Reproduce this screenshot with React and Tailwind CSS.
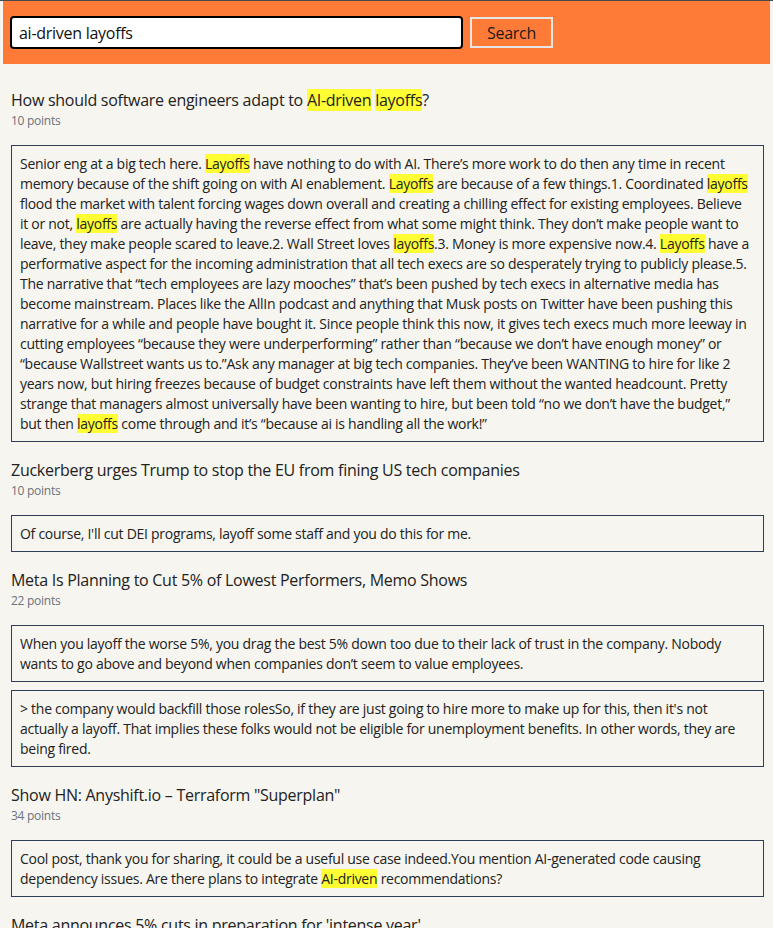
import React from 'react';

const stories = [
  {
    title: 'How should software engineers adapt to AI-driven layoffs?',
    points: 10,
    comments: [
      'Senior eng at a big tech here. Layoffs have nothing to do with AI. There’s more work to do then any time in recent memory because of the shift going on with AI enablement. Layoffs are because of a few things.1. Coordinated layoffs flood the market with talent forcing wages down overall and creating a chilling effect for existing employees. Believe it\u00a0or not, layoffs are actually having the reverse effect from what some might think. They don’t make people want to leave, they make people scared to leave.2. Wall Street loves layoffs.3. Money is more expensive now.4. Layoffs have a performative aspect for the incoming administration that all tech execs are so desperately trying to publicly please.5. The narrative that “tech employees are lazy mooches” that’s been pushed by tech execs in alternative media has become mainstream. Places like the AllIn podcast and anything that Musk posts on Twitter have been pushing this narrative for a while and people have bought it. Since people think this now, it gives tech execs much more leeway in cutting employees “because they were underperforming” rather than “because we don’t have enough money” or “because Wallstreet wants us to.”Ask any manager at big tech companies. They’ve been WANTING to hire for like 2 years now, but hiring freezes because of budget constraints have left them without the wanted headcount. Pretty strange that managers almost universally have been wanting to hire, but been told “no we don’t have the budget,” but\u00a0then layoffs come through and it’s “because ai is handling all the work!”',
    ],
  },
  {
    title: 'Zuckerberg urges Trump to stop the EU from fining US tech companies',
    points: 10,
    comments: ["Of course, I'll cut DEI programs, layoff some staff and you do this for me."],
  },
  {
    title: 'Meta Is Planning to Cut 5% of Lowest Performers, Memo Shows',
    points: 22,
    comments: [
      'When you layoff the worse 5%, you drag the best 5% down too due to their lack of trust in the company. Nobody wants to go above and beyond when companies don’t seem to value employees.',
      "> the company would backfill those rolesSo, if they are just going to hire more to make up for this, then it's not actually a layoff. That implies these folks would not be eligible for unemployment benefits. In other words, they are being fired.",
    ],
  },
  {
    title: 'Show HN: Anyshift.io – Terraform "Superplan"',
    points: 34,
    comments: [
      'Cool post, thank you for sharing, it could be a useful use case indeed.You mention AI-generated code causing dependency issues. Are there plans to integrate AI-driven recommendations?',
    ],
  },
  {
    title: "Meta announces 5% cuts in preparation for 'intense year'",
    points: 19,
    comments: ['Layoffs at this scale are about signalling to investors more than anything else.'],
  },
];

// wrap search terms in a yellow mark
const highlight = (text) =>
  text.split(/(ai-driven|layoffs)/gi).map((part, i) =>
    i % 2 === 1 ? (
      <mark key={i} className="bg-[#ffff33] text-inherit">{part}</mark>
    ) : (
      part
    )
  );

const Story = ({ story }) => (
  <div className="pb-2">
    <h2 className="text-base leading-6 text-[#222]">{highlight(story.title)}</h2>
    <p className="text-xs leading-4 text-[#6b7280] mt-px mb-4">{story.points} points</p>
    {story.comments.map((c, i) => (
      <div
        key={i}
        className="border border-[#2f3e57] px-2 py-[7.5px] mb-2 text-sm leading-5 text-[#222]"
      >
        {highlight(c)}
      </div>
    ))}
  </div>
);

export default function App() {
  return (
    <div
      className="min-h-screen bg-[#f6f5ef] border-t border-[#4a4a4a] px-[3px] tracking-[-0.017em]"
      style={{ fontFamily: '"Open Sans", sans-serif' }}
    >
      <header className="bg-[#fe7a37] h-[63px] flex items-center pl-[7px] gap-[7px]">
        <input
          defaultValue="ai-driven layoffs"
          className="w-[453px] h-[33px] bg-white border-2 border-black rounded px-[7px] text-base text-[#111] outline-none tracking-[-0.017em]"
        />
        <button className="w-[83px] h-[31px] border-2 border-[#e6e6e6] text-base text-[#1a1a1a] tracking-[-0.017em]">
          Search
        </button>
      </header>
      <main className="pl-2 pr-[6px] pt-6">
        {stories.map((s, i) => (
          <Story key={i} story={s} />
        ))}
      </main>
    </div>
  );
}
